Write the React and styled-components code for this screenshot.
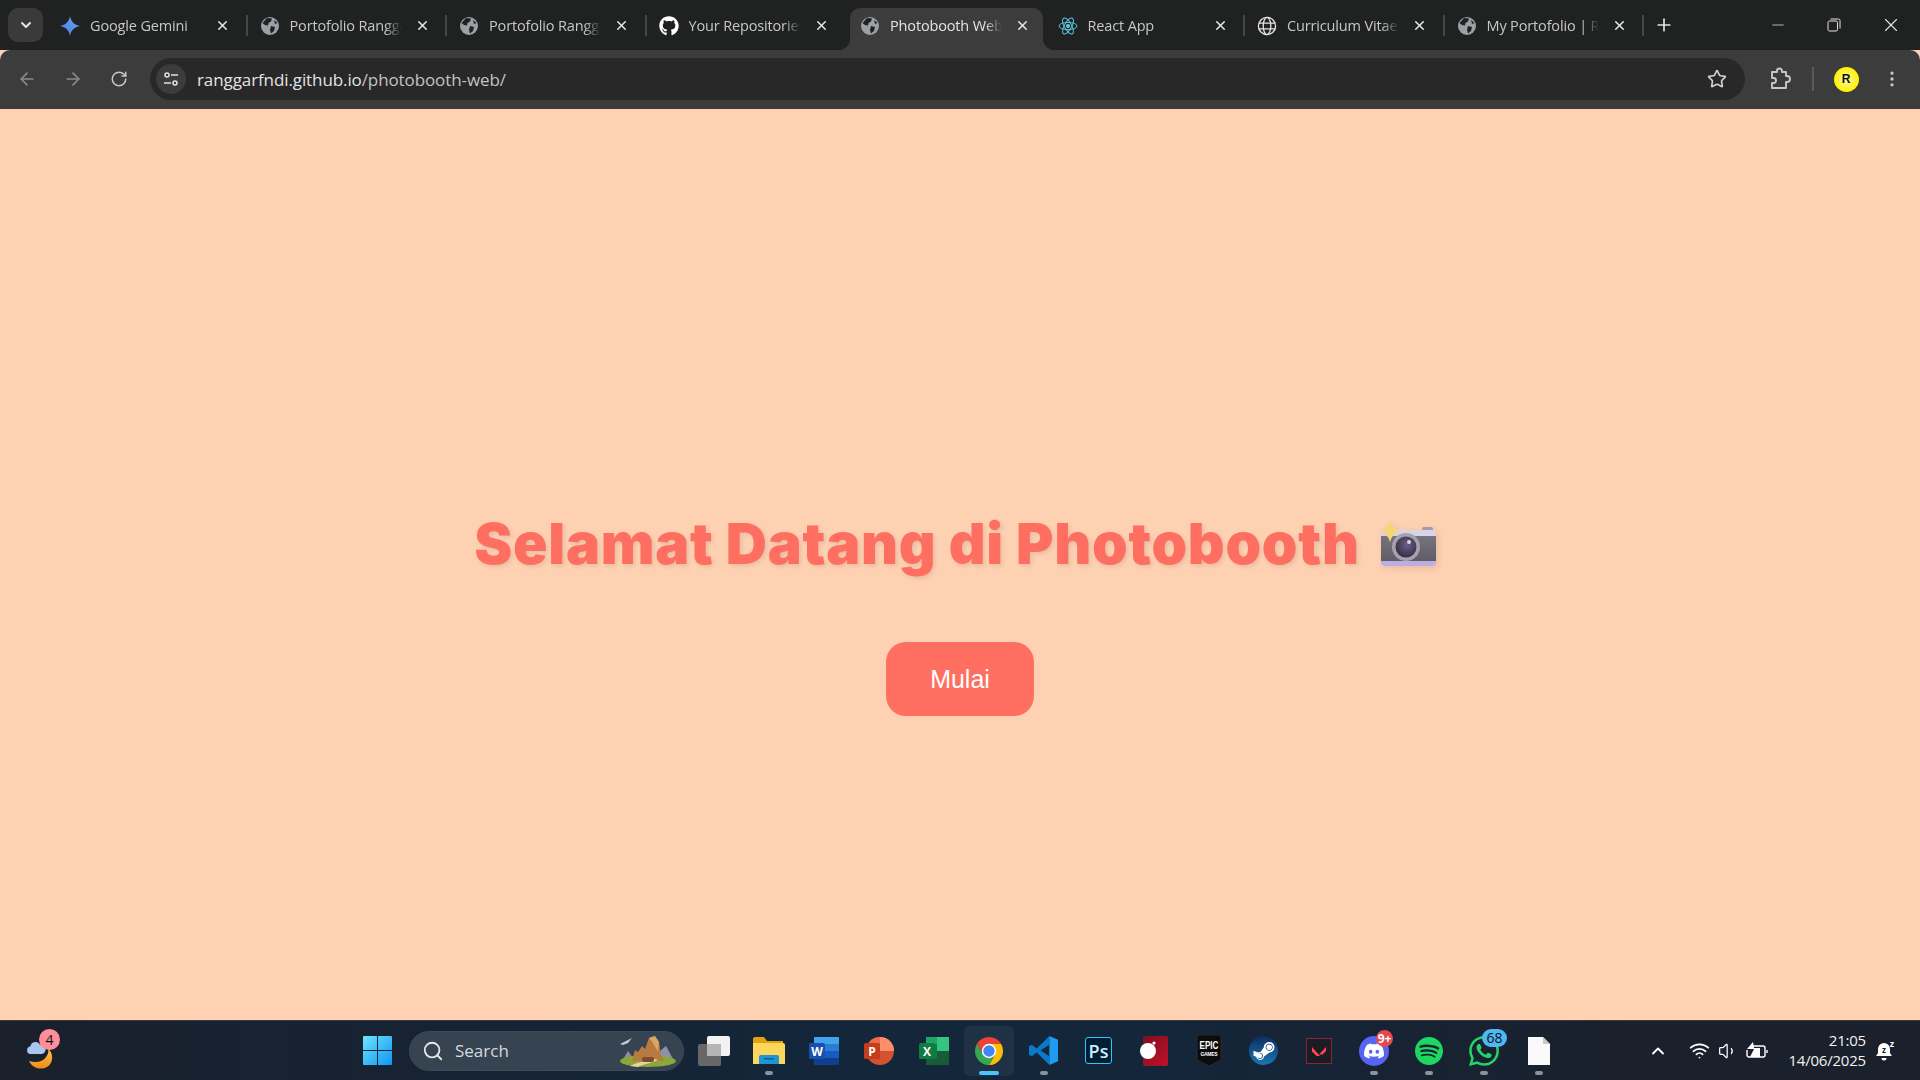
import styled, { createGlobalStyle } from 'styled-components';
import {
  ArrowLeft,
  ArrowRight,
  ChevronDown,
  ChevronUp,
  EllipsisVertical,
  Minus,
  Plus,
  RotateCw,
  Search,
  Star,
  Volume1,
  Wifi,
  X,
} from 'lucide-react';
import { FaGithub, FaSteamSymbol } from 'react-icons/fa';
import { SiDiscord, SiSpotify, SiWhatsapp } from 'react-icons/si';

const uiFont = `'Open Sans', 'Noto Sans', sans-serif`;

const GlobalStyle = createGlobalStyle`
  html, body {
    margin: 0;
    padding: 0;
    background: #ffd1b3;
  }
  * {
    box-sizing: border-box;
  }
`;

const GlobeIcon = () => (
  <svg width="18" height="18" viewBox="0 0 18 18">
    <circle cx="9" cy="9" r="9" fill="#9aa0a6" />
    <path d="M6 1 L11 1.5 L10 4.5 L7.5 6 L7 8.5 L4 8 L1.5 6 Z" fill="#202221" />
    <path d="M10 9 L14 10 L13 14 L10 16.5 L9 13 Z" fill="#202221" />
    <path d="M13 3 L16.5 6 L14 7 Z" fill="#202221" />
  </svg>
);

const GeminiIcon = () => (
  <svg width="20" height="20" viewBox="0 0 20 20">
    <defs>
      <linearGradient id="gem" x1="0" y1="1" x2="1" y2="0">
        <stop offset="0" stopColor="#3f7fe0" />
        <stop offset="1" stopColor="#6aa5f5" />
      </linearGradient>
    </defs>
    <path d="M10 0 C10.8 5.5 14.5 9.2 20 10 C14.5 10.8 10.8 14.5 10 20 C9.2 14.5 5.5 10.8 0 10 C5.5 9.2 9.2 5.5 10 0 Z" fill="url(#gem)" />
  </svg>
);

const ReactIcon = () => (
  <svg width="20" height="20" viewBox="0 0 20 20" fill="none" stroke="#58c4dc" strokeWidth="1">
    <ellipse cx="10" cy="10" rx="9" ry="3.6" />
    <ellipse cx="10" cy="10" rx="9" ry="3.6" transform="rotate(60 10 10)" />
    <ellipse cx="10" cy="10" rx="9" ry="3.6" transform="rotate(120 10 10)" />
    <circle cx="10" cy="10" r="1.7" fill="#58c4dc" />
  </svg>
);

const WireGlobeIcon = () => (
  <svg width="20" height="20" viewBox="0 0 20 20" fill="none" stroke="#e3e3e3" strokeWidth="1.3">
    <circle cx="10" cy="10" r="8.6" />
    <ellipse cx="10" cy="10" rx="3.8" ry="8.6" />
    <path d="M1.6 7.2 H18.4 M1.6 12.8 H18.4" />
  </svg>
);

const TuneIcon = () => (
  <svg width="18" height="18" viewBox="0 0 18 18" fill="none" stroke="#e3e3e3" strokeWidth="1.5">
    <circle cx="5" cy="5" r="2" />
    <path d="M9 5 H16" />
    <circle cx="13" cy="13" r="2" />
    <path d="M2 13 H9" />
  </svg>
);

const RestoreIcon = () => (
  <svg width="14" height="14" viewBox="0 0 14 14" fill="none" stroke="#e3e3e3" strokeWidth="1">
    <rect x="1" y="3" width="9.5" height="10" rx="1.5" />
    <path d="M3.5 1 H11.5 A1.5 1.5 0 0 1 13 2.5 V10.5" />
  </svg>
);

const ExtensionIcon = () => (
  <svg width="22" height="24" viewBox="0 0 22 24" fill="none" stroke="#c7c7c7" strokeWidth="1.9" strokeLinejoin="round">
    <path d="M3 5 H8 V4 A2.5 2.5 0 0 1 13 4 V5 H17 V9 H18 A2.8 2.8 0 0 1 18 15 H17 V21 H3 V16 H4.5 A2.5 2.5 0 0 0 4.5 11 H3 Z" />
  </svg>
);

const CameraIcon = () => (
  <svg width="58" height="48" viewBox="0 0 58 48">
    <defs>
      <linearGradient id="camBody" x1="0" y1="0" x2="0" y2="1">
        <stop offset="0" stopColor="#77747f" />
        <stop offset="1" stopColor="#5f5c66" />
      </linearGradient>
      <radialGradient id="camLens" cx="0.55" cy="0.4" r="0.7">
        <stop offset="0" stopColor="#6d5f88" />
        <stop offset="1" stopColor="#2e2738" />
      </radialGradient>
    </defs>
    <rect x="42" y="7" width="11" height="5" rx="1.5" fill="#a09da8" />
    <rect x="1" y="10" width="55" height="36" rx="4" fill="#d9d3e6" />
    <rect x="1" y="16" width="55" height="25" fill="url(#camBody)" />
    <path d="M1 41 H56 V42 A4 4 0 0 1 52 46 H5 A4 4 0 0 1 1 42 Z" fill="#bcaee0" />
    <circle cx="26" cy="27" r="14" fill="#a5a2ad" />
    <circle cx="26" cy="27" r="10.5" fill="url(#camLens)" />
    <circle cx="29" cy="22" r="2" fill="#d8d2e4" />
    <path d="M10 1 C11.5 5 14 8 18 11 C14 14 11.5 17 10 22 C8.5 17 6 14 2 11 C6 8 8.5 5 10 1 Z" fill="#f4d774" />
  </svg>
);

const WeatherIcon = () => (
  <svg width="30" height="34" viewBox="0 0 30 34">
    <defs>
      <linearGradient id="moon" x1="0" y1="0" x2="0" y2="1">
        <stop offset="0" stopColor="#ffc24a" />
        <stop offset="1" stopColor="#f08a14" />
      </linearGradient>
    </defs>
    <path d="M22 12 C28 16 28 28 19 31 C12 33 6 30 3 24 C10 26 17 25 20 20 C22 17 23 15 22 12 Z" fill="url(#moon)" />
    <path d="M4 17 A4 4 0 0 1 4.5 9.2 A5 5 0 0 1 14 8 A4.5 4.5 0 0 1 16 17 Z" fill="#a8c6ee" />
  </svg>
);

const WindowsLogo = () => (
  <svg width="29" height="29" viewBox="0 0 29 29">
    <defs>
      <linearGradient id="win" x1="0" y1="0" x2="1" y2="1">
        <stop offset="0" stopColor="#6fe4fb" />
        <stop offset="1" stopColor="#0f96f4" />
      </linearGradient>
    </defs>
    <path d="M0 1 A1 1 0 0 1 1 0 H14 V14 H0 Z M15 0 H28 A1 1 0 0 1 29 1 V14 H15 Z M0 15 H14 V29 H1 A1 1 0 0 1 0 28 Z M15 15 H29 V28 A1 1 0 0 1 28 29 H15 Z" fill="url(#win)" />
  </svg>
);

const LandscapeIcon = () => (
  <svg width="62" height="32" viewBox="0 0 62 32">
    <path d="M2 9 L14 3 L10 8 L5 10 Z" fill="#c9c6d4" />
    <path d="M42 16 L48 11 L55 24 L40 24 Z" fill="#8b93a8" />
    <path d="M4 26 L10 16 L16 24 Z" fill="#8d8aa2" />
    <ellipse cx="30" cy="26" rx="28" ry="6" fill="#8ba63a" />
    <path d="M14 26 L17 15 L20 17 L24 11 L27 14 L31 3 L37 1 L41 7 L43 20 L46 26 Z" fill="#b77a41" />
    <path d="M31 3 L37 1 L41 7 L40 17 L35 8 Z" fill="#dba468" />
    <path d="M12 31 C20 26 30 27 36 24 L40 25 C34 28 26 29 20 32 Z" fill="#e6d79a" />
    <rect x="24" y="22" width="12" height="5" rx="2" fill="#7a4e2a" />
  </svg>
);

const TaskViewIcon = () => (
  <svg width="32" height="30" viewBox="0 0 32 30">
    <rect x="0" y="8" width="23" height="22" rx="2" fill="#676767" />
    <rect x="9" y="0" width="23" height="20" rx="2" fill="#f2f2f2" />
    <rect x="9" y="8" width="14" height="12" fill="#b5b5b5" />
  </svg>
);

const FilesIcon = () => (
  <svg width="32" height="28" viewBox="0 0 32 28">
    <path d="M0 2 A2 2 0 0 1 2 0 H11 L14 4 H30 V10 H0 Z" fill="#e0a30d" />
    <path d="M0 6 H30 A2 2 0 0 1 32 8 V27 H0 Z" fill="#fdd75c" />
    <path d="M6 20 A2 2 0 0 1 8 18 H24 A2 2 0 0 1 26 20 V27 H6 Z" fill="#1f95d8" />
    <rect x="11" y="21" width="10" height="1.5" fill="#0d5f96" />
  </svg>
);

const WordIcon = () => (
  <svg width="30" height="28" viewBox="0 0 30 28">
    <rect x="5" y="0" width="25" height="7" fill="#41a5ee" />
    <rect x="5" y="7" width="25" height="7" fill="#2b7cd3" />
    <rect x="5" y="14" width="25" height="7" fill="#185abd" />
    <rect x="5" y="21" width="25" height="7" fill="#103f91" />
    <rect x="0" y="6" width="16" height="16" rx="1.5" fill="#1b4faf" />
    <text x="8" y="18.5" textAnchor="middle" fontFamily="Open Sans, sans-serif" fontWeight="700" fontSize="12" fill="#fff">W</text>
  </svg>
);

const PowerPointIcon = () => (
  <svg width="30" height="28" viewBox="0 0 30 28">
    <circle cx="16" cy="14" r="14" fill="#d35230" />
    <path d="M16 0 A14 14 0 0 1 30 14 H16 Z" fill="#ff8f6b" />
    <path d="M2 14 A14 14 0 0 1 16 0 V14 Z" fill="#ed6c47" />
    <rect x="0" y="6" width="16" height="16" rx="1.5" fill="#c43e1c" />
    <text x="8" y="18.5" textAnchor="middle" fontFamily="Open Sans, sans-serif" fontWeight="700" fontSize="12" fill="#fff">P</text>
  </svg>
);

const ExcelIcon = () => (
  <svg width="30" height="28" viewBox="0 0 30 28">
    <rect x="7" y="0" width="11" height="7" fill="#21a366" />
    <rect x="18" y="0" width="12" height="14" fill="#33c481" />
    <rect x="7" y="7" width="11" height="14" fill="#107c41" />
    <rect x="18" y="14" width="12" height="14" fill="#185c37" />
    <rect x="7" y="21" width="11" height="7" fill="#185c37" />
    <rect x="0" y="6" width="16" height="16" rx="1.5" fill="#107c41" />
    <text x="8" y="18.5" textAnchor="middle" fontFamily="Open Sans, sans-serif" fontWeight="700" fontSize="12" fill="#fff">X</text>
  </svg>
);

const ChromeIcon = () => (
  <svg width="30" height="30" viewBox="0 0 32 32">
    <path d="M3.01 8.5 A15 15 0 0 1 28.99 8.5 H16 L9.5 19.75 Z" fill="#ea4335" />
    <path d="M28.99 8.5 A15 15 0 0 1 16 31 L22.5 19.75 L16 8.5 Z" fill="#fbbc04" />
    <path d="M16 31 A15 15 0 0 1 3.01 8.5 L9.5 19.75 H22.5 Z" fill="#34a853" />
    <circle cx="16" cy="16" r="7.7" fill="#fff" />
    <circle cx="16" cy="16" r="6.1" fill="#4285f4" />
  </svg>
);

const VsCodeIcon = () => (
  <svg width="31" height="31" viewBox="0 0 32 32">
    <path d="M22 1 L31 5 V27 L22 31 Z" fill="#1f9cf0" />
    <path d="M22 1 L9 14 L4 10 L1 11.5 V20.5 L4 22 L9 18 L22 31 V22 L13 16 L22 10 Z" fill="#0b78c8" />
  </svg>
);

const PhotoshopIcon = () => <PsBox>Ps</PsBox>;

const RedAppIcon = () => (
  <svg width="28" height="30" viewBox="0 0 28 30">
    <defs>
      <linearGradient id="redApp" x1="0" y1="0" x2="1" y2="1">
        <stop offset="0" stopColor="#7c0f1e" />
        <stop offset="1" stopColor="#c2102c" />
      </linearGradient>
    </defs>
    <rect x="3" y="0" width="25" height="30" rx="2" fill="url(#redApp)" />
    <circle cx="8" cy="15" r="8" fill="#fff" />
    <circle cx="14" cy="7" r="1.6" fill="#fff" />
  </svg>
);

const EpicIcon = () => (
  <svg width="26" height="31" viewBox="0 0 26 31">
    <path d="M1 0 H25 V25 L13 31 L1 25 Z" fill="#0c0c0c" stroke="#2a2a2a" />
    <text x="13" y="13.5" textAnchor="middle" fontFamily="Liberation Sans, sans-serif" fontWeight="700" fontSize="11" textLength="19" lengthAdjust="spacingAndGlyphs" fill="#fff">EPIC</text>
    <text x="13" y="21" textAnchor="middle" fontFamily="Liberation Sans, sans-serif" fontWeight="700" fontSize="5" textLength="17" lengthAdjust="spacing" fill="#fff">GAMES</text>
  </svg>
);

const ValorantIcon = () => (
  <svg width="26" height="26" viewBox="0 0 26 26">
    <rect x="0.5" y="0.5" width="25" height="25" fill="#1b1c24" stroke="#8a2433" />
    <path d="M6 9 L14 18 H10.5 L6 13.5 Z" fill="#ff4655" />
    <path d="M20 9 V13 L16.5 16.5 H13 Z" fill="#ff4655" />
  </svg>
);

const FileIcon = () => (
  <svg width="22" height="28" viewBox="0 0 22 28">
    <path d="M0 0 H15 L22 7 V28 H0 Z" fill="#fafafa" />
    <path d="M15 0 L22 7 H15 Z" fill="#c8c8c8" />
  </svg>
);

const SteamIcon = () => (
  <SteamDisc>
    <FaSteamSymbol size={24} color="#fff" />
  </SteamDisc>
);

const DiscordIcon = () => (
  <DiscordDisc>
    <SiDiscord size={20} color="#fff" />
  </DiscordDisc>
);

const BatteryIcon = () => (
  <svg width="22" height="20" viewBox="0 0 22 20" fill="none" stroke="#fff" strokeWidth="1.4">
    <path d="M7 5 H17 A2 2 0 0 1 19 7 V14 A2 2 0 0 1 17 16 H3 A2 2 0 0 1 1 14 V9" />
    <path d="M21 9 V12" />
    <path d="M7 1 L1 8 H8 L4 16 H14 V7 H8 Z" fill="#fff" stroke="none" />
  </svg>
);

const SnoozeBellIcon = () => (
  <svg width="20" height="22" viewBox="0 0 20 22">
    <path d="M8 3 A6 6 0 0 1 14 9 V13 L16 16 H0 L2 13 V9 A6 6 0 0 1 8 3 Z" fill="#fff" />
    <path d="M5.5 18 H10.5 A2.5 2.5 0 0 1 5.5 18 Z" fill="#fff" />
    <text x="8" y="13" textAnchor="middle" fontFamily="Open Sans, sans-serif" fontWeight="700" fontSize="8" fill="#1a202c">z</text>
    <text x="16" y="7" textAnchor="middle" fontFamily="Open Sans, sans-serif" fontWeight="700" fontSize="9" fill="#fff">z</text>
  </svg>
);

const tabs = [
  { id: 1, title: 'Google Gemini', icon: <GeminiIcon /> },
  { id: 2, title: 'Portofolio Rangga Arfandi', icon: <GlobeIcon /> },
  { id: 3, title: 'Portofolio Rangga Arfandi', icon: <GlobeIcon /> },
  { id: 4, title: 'Your Repositories', icon: <FaGithub size={20} color="#fff" />, noSeparator: true },
  { id: 5, title: 'Photobooth Web', icon: <GlobeIcon />, active: true, noSeparator: true },
  { id: 6, title: 'React App', icon: <ReactIcon /> },
  { id: 7, title: 'Curriculum Vitae Rangga', icon: <WireGlobeIcon /> },
  { id: 8, title: 'My Portofolio | Rangga', icon: <GlobeIcon /> },
];

const apps = [
  { key: 'task', icon: <TaskViewIcon /> },
  { key: 'files', icon: <FilesIcon />, running: true },
  { key: 'word', icon: <WordIcon /> },
  { key: 'ppt', icon: <PowerPointIcon /> },
  { key: 'excel', icon: <ExcelIcon /> },
  { key: 'chrome', icon: <ChromeIcon />, running: true, active: true },
  { key: 'vscode', icon: <VsCodeIcon />, running: true },
  { key: 'ps', icon: <PhotoshopIcon /> },
  { key: 'red', icon: <RedAppIcon /> },
  { key: 'epic', icon: <EpicIcon /> },
  { key: 'steam', icon: <SteamIcon /> },
  { key: 'valorant', icon: <ValorantIcon /> },
  { key: 'discord', icon: <DiscordIcon />, running: true, badge: '9+', badgeTone: 'red' },
  { key: 'spotify', icon: <SiSpotify size={28} color="#1ed760" />, running: true },
  { key: 'whatsapp', icon: <SiWhatsapp size={30} color="#25d366" />, running: true, badge: '68', badgeTone: 'blue' },
  { key: 'file', icon: <FileIcon />, running: true },
];

const App = () => {
  return (
    <Shell>
      <GlobalStyle />
      <TitleBar>
        <TabSwitcher>
          <ChevronDown size={16} strokeWidth={3} color="#e3e3e3" />
        </TabSwitcher>
        <TabStrip>
          {tabs.map(tab => (
            <Tab key={tab.id} $active={tab.active} $noSeparator={tab.noSeparator}>
              <Favicon $active={tab.active}>{tab.icon}</Favicon>
              <TabTitle $active={tab.active}>{tab.title}</TabTitle>
              <TabClose>
                <X size={15} strokeWidth={2.5} />
              </TabClose>
            </Tab>
          ))}
        </TabStrip>
        <NewTab>
          <Plus size={20} strokeWidth={2} />
        </NewTab>
        <WindowControls>
          <WindowButton><Minus size={18} strokeWidth={1} /></WindowButton>
          <WindowButton><RestoreIcon /></WindowButton>
          <WindowButton $wide><X size={22} strokeWidth={1.2} /></WindowButton>
        </WindowControls>
      </TitleBar>

      <Toolbar>
        <NavButton $dim><ArrowLeft size={20} /></NavButton>
        <NavButton $dim><ArrowRight size={20} /></NavButton>
        <NavButton><RotateCw size={18} /></NavButton>
        <AddressBar>
          <TuneBubble><TuneIcon /></TuneBubble>
          <Url>
            ranggarfndi.github.io<UrlPath>/photobooth-web/</UrlPath>
          </Url>
          <StarButton><Star size={20} /></StarButton>
        </AddressBar>
        <ExtensionButton><ExtensionIcon /></ExtensionButton>
        <ToolDivider />
        <AvatarButton><Avatar>R</Avatar></AvatarButton>
        <MenuButton><EllipsisVertical size={20} /></MenuButton>
      </Toolbar>

      <Page>
        <Heading>
          Selamat Datang di Photobooth
          <HeadingEmoji><CameraIcon /></HeadingEmoji>
        </Heading>
        <StartButton>Mulai</StartButton>
      </Page>

      <Taskbar>
        <WeatherArea>
          <WeatherWidget>
            <WeatherIcon />
            <WeatherBadge>4</WeatherBadge>
          </WeatherWidget>
        </WeatherArea>
        <TaskCenter>
          <StartMenuButton><WindowsLogo /></StartMenuButton>
          <SearchBox>
            <Search size={22} color="#e6e6e6" />
            <SearchLabel>Search</SearchLabel>
            <LandscapeIcon />
          </SearchBox>
          {apps.map(app => (
            <AppButton key={app.key} $active={app.active}>
              {app.icon}
              {app.badge && <AppBadge $tone={app.badgeTone}>{app.badge}</AppBadge>}
              {app.running && <RunDot $active={app.active} />}
            </AppButton>
          ))}
        </TaskCenter>
        <Tray>
          <TrayChevron><ChevronUp size={20} strokeWidth={2.2} /></TrayChevron>
          <TrayIcon><Wifi size={21} /></TrayIcon>
          <TrayIcon $narrow><Volume1 size={20} strokeWidth={1.5} /></TrayIcon>
          <TrayIcon><BatteryIcon /></TrayIcon>
          <Clock>
            <span>21:05</span>
            <span>14/06/2025</span>
          </Clock>
          <BellButton><SnoozeBellIcon /></BellButton>
        </Tray>
      </Taskbar>
    </Shell>
  );
};

export default App;

const Shell = styled.div`
  width: 100%;
  height: 100vh;
  display: flex;
  flex-direction: column;
  overflow: hidden;
  font-family: ${uiFont};
`;

const TitleBar = styled.header`
  height: 50px;
  flex-shrink: 0;
  display: flex;
  align-items: flex-end;
  padding-left: 8px;
  background: #202221;
`;

const TabSwitcher = styled.div`
  width: 35px;
  height: 34px;
  margin-bottom: 8px;
  margin-right: 3px;
  display: flex;
  align-items: center;
  justify-content: center;
  border-radius: 10px;
  background: #3a3a3a;
`;

const TabStrip = styled.div`
  display: flex;
`;

const Tab = styled.div`
  position: relative;
  width: 199.5px;
  height: 42px;
  padding-bottom: 7px;
  display: flex;
  align-items: center;

  ${p =>
    p.$active
      ? `
    &::before {
      content: '';
      position: absolute;
      top: 0;
      bottom: 0;
      left: 6px;
      right: 1px;
      border-radius: 10px 10px 0 0;
      background: #3c3c3c;
    }
    &::after {
      content: '';
      position: absolute;
      left: -6px;
      right: -11px;
      bottom: 0;
      height: 12px;
      background:
        radial-gradient(circle at 0 0, transparent 12px, #3c3c3c 12.5px) left bottom / 12px 12px no-repeat,
        radial-gradient(circle at 100% 0, transparent 12px, #3c3c3c 12.5px) right bottom / 12px 12px no-repeat;
    }
  `
      : p.$noSeparator
        ? ''
        : `
    &::after {
      content: '';
      position: absolute;
      top: 7px;
      right: -2px;
      width: 2px;
      height: 21px;
      background: #444746;
    }
  `}
`;

const Favicon = styled.span`
  position: relative;
  z-index: 1;
  width: 20px;
  height: 20px;
  margin-left: ${p => (p.$active ? '16px' : '14px')};
  display: flex;
  align-items: center;
  justify-content: center;
`;

const TabTitle = styled.span`
  position: relative;
  z-index: 1;
  width: 112px;
  margin-left: 10px;
  overflow: hidden;
  white-space: nowrap;
  font-size: 14.5px;
  letter-spacing: -0.15px;
  color: ${p => (p.$active ? '#e3e3e3' : '#c7c7c7')};
  mask-image: linear-gradient(to right, #000 85%, transparent 100%);
`;

const TabClose = styled.span`
  position: relative;
  z-index: 1;
  margin-left: 13px;
  display: flex;
  color: #e3e3e3;
`;

const NewTab = styled.div`
  width: 44px;
  height: 50px;
  display: flex;
  align-items: center;
  justify-content: center;
  color: #e3e3e3;
`;

const WindowControls = styled.div`
  margin-left: auto;
  display: flex;
`;

const WindowButton = styled.div`
  width: ${p => (p.$wide ? '58px' : '56px')};
  height: 50px;
  display: flex;
  align-items: center;
  justify-content: center;
  color: #e3e3e3;
`;

const Toolbar = styled.div`
  height: 59px;
  flex-shrink: 0;
  display: flex;
  align-items: center;
  padding: 0 8px 1px 4px;
  border-radius: 10px 10px 0 0;
  background: #3c3c3c;
`;

const NavButton = styled.div`
  width: 46px;
  height: 42px;
  display: flex;
  align-items: center;
  justify-content: center;
  color: ${p => (p.$dim ? '#8a8a8a' : '#c7c7c7')};
`;

const AddressBar = styled.div`
  flex: 1;
  height: 42px;
  margin-left: 8px;
  padding: 0 18px 0 6px;
  display: flex;
  align-items: center;
  border-radius: 21px;
  background: #282828;
`;

const TuneBubble = styled.div`
  width: 30px;
  height: 30px;
  display: flex;
  align-items: center;
  justify-content: center;
  border-radius: 50%;
  background: #3c3c3c;
`;

const Url = styled.div`
  margin-left: 11px;
  font-size: 17px;
  letter-spacing: -0.1px;
  color: #e3e3e3;
`;

const UrlPath = styled.span`
  color: #c2c2c2;
`;

const StarButton = styled.div`
  margin-left: auto;
  display: flex;
  color: #d0d0d0;
`;

const ExtensionButton = styled.div`
  width: 46px;
  margin-left: 12px;
  display: flex;
  justify-content: center;
`;

const ToolDivider = styled.div`
  width: 2px;
  height: 24px;
  margin-left: 9px;
  background: #5a5a5a;
`;

const AvatarButton = styled.div`
  width: 40px;
  margin-left: 12px;
  display: flex;
  justify-content: center;
`;

const Avatar = styled.div`
  width: 25px;
  height: 25px;
  display: flex;
  align-items: center;
  justify-content: center;
  border-radius: 50%;
  background: radial-gradient(circle, #fff7a8 0%, #fff000 70%);
  font-family: 'Liberation Sans', sans-serif;
  font-size: 12px;
  font-weight: 700;
  color: #111;
`;

const MenuButton = styled.div`
  width: 40px;
  margin-left: 6px;
  display: flex;
  justify-content: center;
  color: #c7c7c7;
`;

const Page = styled.main`
  flex: 1;
  display: flex;
  flex-direction: column;
  align-items: center;
  padding-top: 392px;
  background: #ffd1b3;
`;

const Heading = styled.h1`
  margin: 0;
  display: flex;
  align-items: center;
  font-family: 'Inter', 'Open Sans', sans-serif;
  font-size: 57px;
  font-weight: 900;
  line-height: 86px;
  letter-spacing: 0.78px;
  white-space: nowrap;
  color: #ff6f61;
  text-shadow: 2px 2px 4px rgba(0, 0, 0, 0.1);
`;

const HeadingEmoji = styled.span`
  display: flex;
  margin-left: 20px;
  margin-right: 8px;
  filter: drop-shadow(2px 2px 3px rgba(0, 0, 0, 0.1));
`;

const StartButton = styled.button`
  width: 148px;
  height: 74px;
  margin-top: 55px;
  border: none;
  border-radius: 20px;
  background: #ff6f61;
  font-family: 'Liberation Sans', sans-serif;
  font-size: 25px;
  color: #fff;
`;

const Taskbar = styled.footer`
  height: 60px;
  flex-shrink: 0;
  display: grid;
  grid-template-columns: 350px auto 1fr;
  align-items: center;
  border-top: 1px solid #373b42;
  background: linear-gradient(90deg, #1a202c 0%, #13263a 45%, #14263a 60%, #1a202c 85%);
`;

const WeatherArea = styled.div`
  padding-left: 26px;
`;

const WeatherWidget = styled.div`
  position: relative;
  width: 30px;
  height: 34px;
  margin-top: 6px;
`;

const WeatherBadge = styled.span`
  position: absolute;
  top: -8px;
  left: 13px;
  width: 21px;
  height: 21px;
  display: flex;
  align-items: center;
  justify-content: center;
  border-radius: 50%;
  background: #ff8d9c;
  font-size: 14px;
  color: #111;
`;

const TaskCenter = styled.div`
  display: flex;
  align-items: center;
`;

const StartMenuButton = styled.div`
  width: 55px;
  height: 50px;
  margin-right: 4px;
  display: flex;
  align-items: center;
  justify-content: center;
`;

const SearchBox = styled.div`
  width: 275px;
  height: 40px;
  margin-right: 2px;
  padding: 0 3px 0 12px;
  display: flex;
  align-items: center;
  border: 1px solid #3c4a58;
  border-radius: 20px;
  background: #364452;
`;

const SearchLabel = styled.span`
  margin-left: 11px;
  margin-right: auto;
  font-size: 17px;
  color: #d6d9dc;
`;

const AppButton = styled.div`
  position: relative;
  width: 55px;
  height: 50px;
  display: flex;
  align-items: center;
  justify-content: center;

  ${p =>
    p.$active &&
    `
    &::before {
      content: '';
      position: absolute;
      top: 0;
      bottom: 0;
      left: 3px;
      right: 2px;
      border-radius: 5px;
      background: #1f3245;
    }
    & > * { z-index: 1; }
  `}
`;

const RunDot = styled.span`
  position: absolute;
  bottom: 1px;
  left: 50%;
  width: ${p => (p.$active ? '20px' : '8px')};
  height: 4px;
  border-radius: 2px;
  transform: translateX(-50%);
  background: ${p => (p.$active ? '#4cc2ff' : '#8b9299')};
`;

const AppBadge = styled.span`
  position: absolute;
  top: ${p => (p.$tone === 'red' ? '4px' : '3px')};
  left: ${p => (p.$tone === 'red' ? '30px' : '26px')};
  height: ${p => (p.$tone === 'red' ? '17px' : '18px')};
  min-width: ${p => (p.$tone === 'red' ? '17px' : '25px')};
  padding: 0 1px;
  display: flex;
  align-items: center;
  justify-content: center;
  border-radius: 9px;
  font-size: ${p => (p.$tone === 'red' ? '12px' : '14px')};
  font-weight: ${p => (p.$tone === 'red' ? 700 : 400)};
  color: ${p => (p.$tone === 'red' ? '#fff' : '#111')};
  background: ${p => (p.$tone === 'red' ? '#e5484d' : '#4cb8f5')};
`;

const PsBox = styled.span`
  width: 27px;
  height: 27px;
  display: flex;
  align-items: center;
  justify-content: center;
  border: 1.5px solid #31c5f0;
  border-radius: 3px;
  background: #001e36;
  font-size: 18px;
  font-weight: 600;
  color: #cfeefa;
`;

const SteamDisc = styled.span`
  width: 29px;
  height: 29px;
  display: flex;
  align-items: center;
  justify-content: center;
  border-radius: 50%;
  background: linear-gradient(#0f2c5c, #1877b5);
`;

const DiscordDisc = styled.span`
  width: 30px;
  height: 30px;
  display: flex;
  align-items: center;
  justify-content: center;
  border-radius: 50%;
  background: #5865f2;
`;

const Tray = styled.div`
  display: flex;
  align-items: center;
  justify-content: flex-end;
  padding-right: 24px;
  color: #fff;
`;

const TrayChevron = styled.div`
  width: 24px;
  margin-right: 14px;
  display: flex;
  justify-content: center;
`;

const TrayIcon = styled.div`
  width: ${p => (p.$narrow ? '28px' : '30px')};
  display: flex;
  justify-content: center;
`;

const Clock = styled.div`
  width: 94px;
  margin-bottom: 2px;
  display: flex;
  flex-direction: column;
  align-items: flex-end;
  font-family: 'Open Sans', sans-serif;
  font-size: 15px;
  line-height: 20px;
  letter-spacing: -0.2px;
  color: #f2f2f2;
`;

const BellButton = styled.div`
  width: 20px;
  margin-left: 10px;
  display: flex;
`;
